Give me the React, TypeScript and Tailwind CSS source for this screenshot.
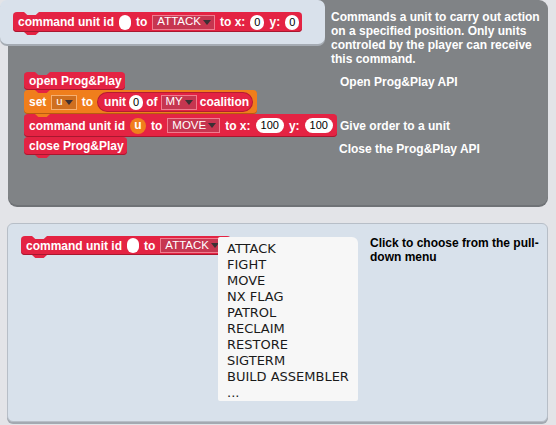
import React from "react";

const TRAP = "[clip-path:polygon(0_0,100%_0,78%_100%,22%_100%)]";

function Arrow() {
  return (
    <svg width="8" height="5" viewBox="0 0 8 5" className="shrink-0">
      <path d="M0 0H8L4 5Z" fill="#3a3034" />
    </svg>
  );
}

function Oval({ children, wide }: { children?: React.ReactNode; wide?: boolean }) {
  return (
    <div className={`flex h-[15px] min-w-[12px] items-center justify-center rounded-full bg-white font-['Liberation_Sans',Arial,sans-serif] text-[11px] font-normal leading-none text-black ${wide ? "px-[5px]" : "px-[4px]"}`}>
      {children}
    </div>
  );
}

function RedDrop({ label }: { label: string }) {
  return (
    <div className="flex h-[15px] items-center gap-[2px] border border-[#ef7d8f] bg-[#c63650] pl-[4px] pr-[3px] font-['Liberation_Sans',Arial,sans-serif] text-[11.5px] font-normal leading-none text-white">
      <span>{label}</span>
      <Arrow />
    </div>
  );
}

function Block({
  className,
  notch,
  bump,
  children,
}: {
  className: string;
  notch?: string;
  bump?: string;
  children: React.ReactNode;
}) {
  return (
    <div className={`relative flex items-center gap-[5px] rounded-[4px] pl-[5px] pr-[3px] font-['Liberation_Sans',Arial,sans-serif] text-[12px] font-bold leading-none text-white ${className}`}>
      {notch && <div className={`absolute left-[11px] top-0 h-[3px] w-[15px] ${TRAP} ${notch}`} />}
      {children}
      {bump && <div className={`absolute left-[11px] top-full z-10 h-[3px] w-[15px] ${TRAP} ${bump}`} />}
    </div>
  );
}

export default function App() {
  return (
    <div className="relative h-[425px] w-[556px] overflow-hidden bg-[#e3e4e8] font-['Liberation_Sans',Arial,sans-serif]">
      {/* dark panel */}
      <div className="ml-[8px] flex h-[205px] w-[540px] flex-col rounded-[9px] bg-[#808386] [box-shadow:0_2px_0_#6f7276]">
        <div className="ml-[323px] mt-[10px] whitespace-nowrap text-[12px] font-bold leading-[14px] text-white">
          Commands a unit to carry out action
          <br />
          on a specified position. Only units
          <br />
          controled by the player can receive
          <br />
          this command.
        </div>

        <div className="mt-[6px] flex flex-col pl-[16px]">
          {/* open */}
          <div className="flex h-[18px] items-center">
            <div className="flex w-[316px] self-stretch">
              <Block className="h-[18px] bg-[#e42343] [box-shadow:inset_0_-1px_0_#a9172f]" notch="bg-[#808386]" bump="bg-[#e42343]">
                open Prog&amp;Play
              </Block>
            </div>
            <div className="pt-[1px] text-[12px] font-bold text-white">Open Prog&amp;Play API</div>
          </div>

          {/* set */}
          <div className="flex h-[24px] items-center">
            <div className="flex w-[316px] self-stretch">
              <Block className="h-[24px] gap-[5px] bg-[#f07e1c] pr-[5px] [box-shadow:inset_0_-1px_0_#b85c10]" bump="bg-[#f07e1c]">
                <span>set</span>
                <div className="flex h-[15px] items-center gap-[2px] border border-[#f6b071] bg-[#cf6f1f] pl-[4px] pr-[3px] text-[11.5px] font-normal">
                  <span>u</span>
                  <Arrow />
                </div>
                <span>to</span>
                <div className="flex h-[18px] items-center gap-[3px] rounded-full bg-[#e42343] pl-[6px] pr-[3px] [box-shadow:0_0_0_1px_#b51a33]">
                  <span>unit</span>
                  <Oval>0</Oval>
                  <span>of</span>
                  <RedDrop label="MY" />
                  <span>coalition</span>
                </div>
              </Block>
            </div>
          </div>

          {/* command */}
          <div className="flex h-[23px] items-center">
            <div className="flex w-[316px] self-stretch">
              <Block className="h-[23px] bg-[#e42343] pr-[4px] [box-shadow:inset_0_-1px_0_#a9172f]" bump="bg-[#e42343]">
                <span>command unit id</span>
                <div className="flex h-[16px] w-[16px] items-center justify-center rounded-full bg-[#f07e1c] pb-[2px] text-[12px]">u</div>
                <span>to</span>
                <RedDrop label="MOVE" />
                <span>to x:</span>
                <Oval wide>100</Oval>
                <span>y:</span>
                <Oval wide>100</Oval>
              </Block>
            </div>
            <div className="text-[12px] font-bold text-white">Give order to a unit</div>
          </div>

          {/* close */}
          <div className="flex h-[18px] items-center">
            <div className="flex w-[315px] self-stretch">
              <Block className="h-[18px] bg-[#e42343] [box-shadow:inset_0_-1px_0_#a9172f]" bump="bg-[#e42343]">
                close Prog&amp;Play
              </Block>
            </div>
            <div className="pt-[5px] text-[12px] font-bold text-white">Close the Prog&amp;Play API</div>
          </div>
        </div>
      </div>

      {/* top light panel overlay */}
      <div className="absolute left-0 top-0 h-[44px] w-[325px] rounded-[7px] bg-[#d9e1eb] pl-[13px] pt-[12px] [box-shadow:0_2px_0_#a5abb3]">
        <div className="flex">
          <Block className="h-[20px] bg-[#e42343] [box-shadow:inset_0_-1px_0_#a9172f]" notch="bg-[#d9e1eb]" bump="bg-[#e42343]">
            <span>command unit id</span>
            <Oval />
            <span>to</span>
            <RedDrop label="ATTACK" />
            <span>to x:</span>
            <Oval>0</Oval>
            <span>y:</span>
            <Oval>0</Oval>
          </Block>
        </div>
      </div>

      {/* lower panel */}
      <div className="relative ml-[7px] mt-[18px] flex h-[199px] w-[541px] rounded-[6px] border border-[#b7bec7] bg-[#d8e1eb] pl-[13px] pt-[12px] [box-shadow:0_2px_0_#a3a9b1]">
        <div className="w-[349px]">
          <div className="flex">
            <Block className="h-[19px] bg-[#e42343] pr-[8px] [box-shadow:inset_0_-1px_0_#a9172f]" notch="bg-[#d8e1eb]" bump="bg-[#e42343]">
              <span>command unit id</span>
              <Oval />
              <span>to</span>
              <RedDrop label="ATTACK" />
            </Block>
          </div>
        </div>
        <div className="whitespace-nowrap pt-[1px] text-[12px] font-bold leading-[13.5px] text-black">
          Click to choose from the pull-
          <br />
          down menu
        </div>

        <div className="absolute left-[210px] top-[13px] z-20 h-[164px] w-[140px] rounded-[2px] rounded-tr-[6px] bg-[#f7f7f7] pl-[9px] pt-[4px] font-['DejaVu_Sans',sans-serif] text-[13px] font-normal leading-[16px] text-[#1a1a1a]">
          {["ATTACK", "FIGHT", "MOVE", "NX FLAG", "PATROL", "RECLAIM", "RESTORE", "SIGTERM", "BUILD ASSEMBLER", "..."].map((t) => (
            <div key={t} className="whitespace-nowrap">{t}</div>
          ))}
        </div>
      </div>
    </div>
  );
}
